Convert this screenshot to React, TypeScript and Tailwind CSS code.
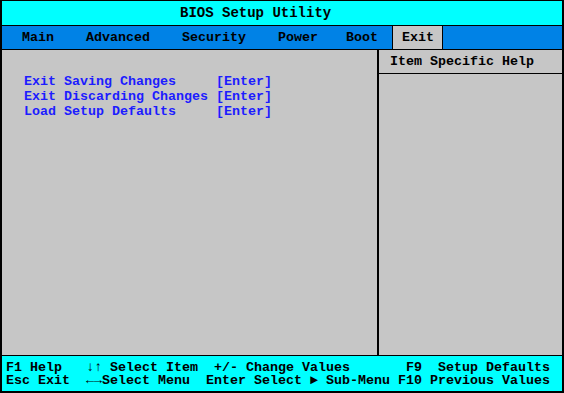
const MONO = { fontFamily: '"Liberation Mono", "DejaVu Sans Mono", monospace' }

// one glyph per 8px cell, so arrows from a fallback font can't shift the columns
function Cell({ ch }: { ch: string }) {
  return <span className="inline-block w-[8px] text-center">{ch}</span>
}

const MENU = [
  { name: 'Main', ml: 'ml-[20px]' },
  { name: 'Advanced', ml: 'ml-[32px]' },
  { name: 'Security', ml: 'ml-[32px]' },
  { name: 'Power', ml: 'ml-[32px]' },
  { name: 'Boot', ml: 'ml-[28px]' },
]

const ITEMS = [
  'Exit Saving Changes     [Enter]',
  'Exit Discarding Changes [Enter]',
  'Load Setup Defaults     [Enter]',
]

export default function App() {
  return (
    <div
      className="w-[564px] h-[393px] flex flex-col bg-[#c6c6c6] border-black border-t border-l-2 border-r-2 border-b-2 text-[13.333px] font-bold text-black overflow-hidden"
      style={MONO}
    >
      {/* Title */}
      <div className="h-[25px] shrink-0 bg-[#00ffff] border-b border-black flex items-center pl-[178px] text-[14px] whitespace-pre">
        BIOS Setup Utility
      </div>

      {/* Menu bar */}
      <div className="h-[24px] shrink-0 bg-[#0082e6] border-b border-black flex items-stretch whitespace-pre">
        {MENU.map((m) => (
          <span key={m.name} className={`${m.ml} flex items-center`}>
            {m.name}
          </span>
        ))}
        <span className="ml-[14px] w-[51px] flex items-center pl-[9px] bg-[#c6c6c6] border-x border-black">
          Exit
        </span>
      </div>

      {/* Body */}
      <div className="flex-1 flex min-h-0">
        <div className="w-[377px] shrink-0 border-r-2 border-black pt-[24px] pl-[22px] text-[#1c1cff] leading-[15px]">
          {ITEMS.map((t) => (
            <div key={t} className="whitespace-pre">
              {t}
            </div>
          ))}
        </div>
        <div className="flex-1 flex flex-col">
          <div className="h-[24px] border-b border-black flex items-center pl-[11px] pt-[1px] whitespace-pre">
            Item Specific Help
          </div>
        </div>
      </div>

      {/* Footer */}
      <div className="h-[36px] shrink-0 bg-[#00ffff] border-t border-black pt-[5px] pl-[4px] leading-[13px] whitespace-pre">
        <div>
          F1 Help   <Cell ch="↓" />
          <Cell ch="↑" /> Select Item  +/- Change Values       F9  Setup Defaults
        </div>
        <div>
          Esc Exit  <Cell ch="←" />
          <Cell ch="→" />Select Menu  Enter Select <Cell ch="►" /> Sub-Menu F10 Previous Values
        </div>
      </div>
    </div>
  )
}
